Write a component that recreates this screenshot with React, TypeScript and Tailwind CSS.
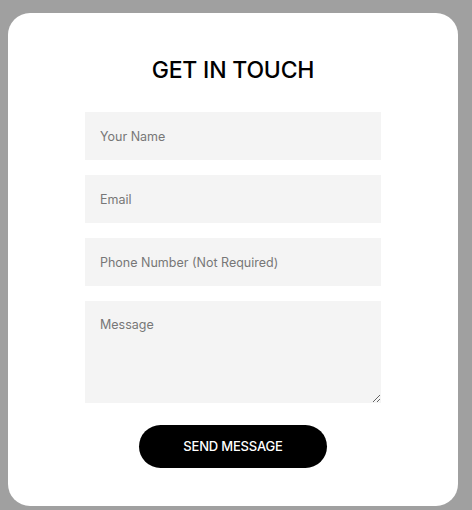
export default function App() {
  return (
    <div className="min-h-screen bg-[#a0a0a0] pt-[13px] pl-[8px] font-['Inter',sans-serif]">
      <div className="w-[450px] h-[493px] rounded-[22px] bg-white pt-[40px]">
        <h2 className="text-center text-[23px] leading-[34px] font-medium text-black tracking-[-0.2px]">
          GET IN TOUCH
        </h2>
        <form className="w-[296px] mx-auto mt-[25px] flex flex-col gap-[15px]">
          <input
            type="text"
            placeholder="Your Name"
            className="h-[48px] w-full bg-[#f4f4f4] px-[15px] text-[12.5px] text-gray-800 placeholder:text-[#777] outline-none"
          />
          <input
            type="email"
            placeholder="Email"
            className="h-[48px] w-full bg-[#f4f4f4] px-[15px] text-[12.5px] text-gray-800 placeholder:text-[#777] outline-none"
          />
          <input
            type="tel"
            placeholder="Phone Number (Not Required)"
            className="h-[48px] w-full bg-[#f4f4f4] px-[15px] text-[12.5px] text-gray-800 placeholder:text-[#777] outline-none"
          />
          <textarea
            placeholder="Message"
            className="h-[102px] w-full bg-[#f4f4f4] px-[15px] pt-[14px] text-[12.5px] leading-[20px] text-gray-800 placeholder:text-[#777] outline-none"
          ></textarea>
          <button
            type="submit"
            className="mx-auto mt-[7px] h-[43px] w-[188px] rounded-full bg-black text-white text-[13px] font-medium tracking-[-0.2px]"
          >
            SEND MESSAGE
          </button>
        </form>
      </div>
    </div>
  );
}
